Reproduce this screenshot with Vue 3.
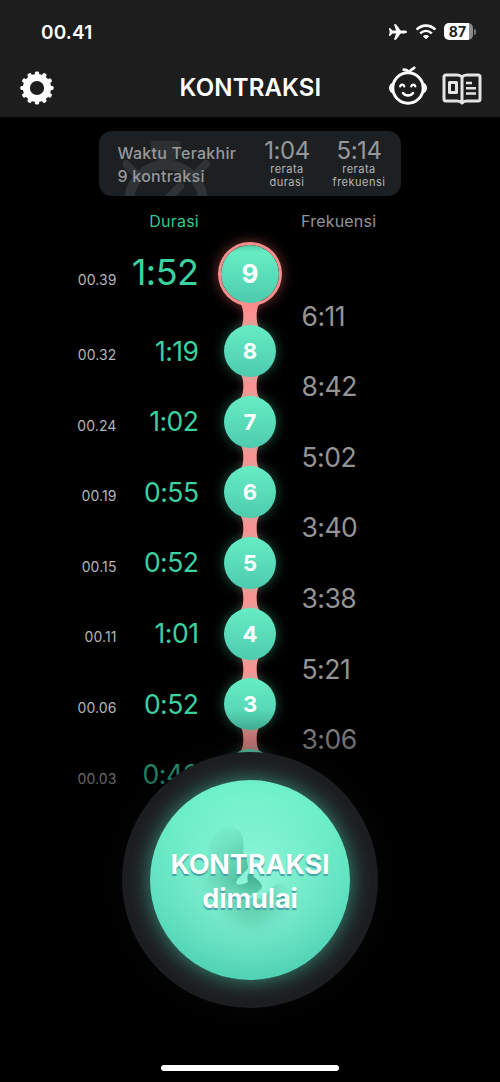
<script setup>
const rows = [
  { n: 9, at: '00.39', duration: '1:52' },
  { n: 8, at: '00.32', duration: '1:19' },
  { n: 7, at: '00.24', duration: '1:02' },
  { n: 6, at: '00.19', duration: '0:55' },
  { n: 5, at: '00.15', duration: '0:52' },
  { n: 4, at: '00.11', duration: '1:01' },
  { n: 3, at: '00.06', duration: '0:52' },
  { n: 2, at: '00.03', duration: '0:46' }
]
const frequencies = ['6:11', '8:42', '5:02', '3:40', '3:38', '5:21', '3:06']
const teeth = Array.from({ length: 12 }, (_, i) => i * 30)
</script>

<template>
  <div class="screen">
    <header class="header">
      <div class="status">
        <span class="clock">00.41</span>
        <div class="indicators">
          <svg class="plane" width="20" height="18" viewBox="0 0 20 18" fill="#fff">
            <path d="M19 9C19 8 17.8 7.6 16.5 7.6H12.7L8 1.2H6L8 7.6H4.3L2.4 5.2H.8L1.8 9L.8 12.8H2.4L4.3 10.4H8L6 16.8H8L12.7 10.4H16.5C17.8 10.4 19 10 19 9Z" />
          </svg>
          <svg class="wifi" width="22" height="16" viewBox="0 0 22 16" fill="none" stroke="#fff" stroke-width="2.6">
            <path d="M1.6 5.7C7 .3 15 .3 20.4 5.7" />
            <path d="M5.2 9.4C8.7 6.1 13.3 6.1 16.8 9.4" />
            <path d="M7.9 12.2C9.7 10.5 12.3 10.5 14.1 12.2L11 15.3Z" fill="#fff" stroke="none" />
          </svg>
          <div class="battery"><span>87</span></div>
          <i class="battery-tip"></i>
        </div>
      </div>
      <nav class="nav">
        <svg class="gear" width="34" height="34" viewBox="-17 -17 34 34">
          <circle r="10.6" fill="none" stroke="#fff" stroke-width="7" />
          <rect v-for="t in teeth" :key="t" x="-2.1" y="-16.6" width="4.2" height="5" rx="1.4" fill="#fff" :transform="`rotate(${t})`" />
        </svg>
        <h1>KONTRAKSI</h1>
        <div class="actions">
          <svg width="40" height="40" viewBox="0 0 40 40" fill="none" stroke="#fff" stroke-width="3" stroke-linecap="round">
            <circle cx="20" cy="22" r="15.2" />
            <path d="M4.8 17.5C.8 19 .8 25 4.8 26.5ZM35.2 17.5C39.2 19 39.2 25 35.2 26.5Z" fill="#fff" stroke-width="1.5" />
            <path d="M20.5 6.5C20 4.5 18 3.7 15.7 3.6M20.5 6.5C21.8 4.2 24 3.8 26.3 1.8" stroke-width="2.7" />
            <path d="M12.2 20.3C12.8 18.1 15.6 18.1 16.2 20.3M23.3 20.3C23.9 18.1 26.7 18.1 27.3 20.3" stroke-width="2.3" />
            <path d="M15 27C17.3 30.2 22.7 30.2 25 27" stroke-width="2.5" />
          </svg>
          <svg width="40" height="32" viewBox="0 0 40 32" fill="none" stroke="#e4e4e5" stroke-width="3" stroke-linejoin="round">
            <path d="M20 4C18.5 2.3 16.8 2 15 2H4Q2 2 2 4V26Q2 28 4 28H15C17 28 18.7 28.4 20 30C21.3 28.4 23 28 25 28H36Q38 28 38 26V4Q38 2 36 2H25C23.2 2 21.5 2.3 20 4ZM20 4V29" />
            <rect x="7.5" y="9.5" width="7" height="10" />
            <path d="M24 10H30M24 15.2H34M24 20.5H34" stroke-width="2.6" />
          </svg>
        </div>
      </nav>
    </header>

    <section class="summary">
      <svg class="stopwatch" width="90" height="60" viewBox="0 0 90 60">
        <path d="M31 1H55Q58 1 58 4V13Q58 16 55 16H52V24H34V16H31Q28 16 28 13V4Q28 1 31 1Z" fill="#2c3033" />
        <circle cx="43" cy="62" r="37" fill="none" stroke="#2f3336" stroke-width="10" />
        <path d="M3 24L14 35M83 24L72 35M43 61L57 46" stroke="#2f3336" stroke-width="8" stroke-linecap="round" />
      </svg>
      <div class="caption">Waktu Terakhir<br />9 kontraksi</div>
      <div class="stat">
        <b>1:04</b><span>rerata<br />durasi</span>
      </div>
      <div class="stat last">
        <b>5:14</b><span>rerata<br />frekuensi</span>
      </div>
    </section>

    <div class="headings">
      <span class="h-duration">Durasi</span>
      <span class="h-frequency">Frekuensi</span>
    </div>

    <main class="timeline">
      <div class="times">
        <div v-for="r in rows" :key="r.n" class="cell">{{ r.at }}</div>
      </div>
      <div class="durations">
        <div v-for="r in rows" :key="r.n" class="cell">{{ r.duration }}</div>
      </div>
      <div class="chain">
        <template v-for="(r, i) in rows" :key="r.n">
          <svg v-if="i > 0" class="link" width="28" height="30" viewBox="0 0 28 30">
            <path d="M3 0C7 6 7.3 10 7.3 15C7.3 20 7 24 3 30H25C21 24 20.7 20 20.7 15C20.7 10 21 6 25 0Z" fill="#ff9292" />
          </svg>
          <div class="bead" :class="{ latest: i === 0 }">{{ r.n }}</div>
        </template>
      </div>
      <div class="frequencies">
        <div v-for="f in frequencies" :key="f" class="cell">{{ f }}</div>
      </div>
    </main>

    <footer class="dock">
      <div class="ring">
        <button class="start">
          <svg class="embryo" width="200" height="200" viewBox="0 0 200 200">
            <defs>
              <linearGradient id="head" gradientUnits="userSpaceOnUse" x1="84" y1="46" x2="84" y2="118">
                <stop offset="0" stop-color="#46b794" stop-opacity="0.12" />
                <stop offset="0.35" stop-color="#46b794" stop-opacity="0.6" />
                <stop offset="0.75" stop-color="#36a788" stop-opacity="0.85" />
                <stop offset="1" stop-color="#46b794" stop-opacity="0.5" />
              </linearGradient>
              <linearGradient id="edge" x1="0" y1="0" x2="1" y2="0">
                <stop offset="0.08" stop-color="#fff" stop-opacity="0" />
                <stop offset="0.75" stop-color="#fff" />
              </linearGradient>
              <mask id="fade"><rect x="42" y="40" width="76" height="90" fill="url(#edge)" /></mask>
              <radialGradient id="body" gradientUnits="userSpaceOnUse" cx="102" cy="118" r="42">
                <stop offset="0" stop-color="#3fae8d" stop-opacity="0.5" />
                <stop offset="0.5" stop-color="#3fae8d" stop-opacity="0.32" />
                <stop offset="1" stop-color="#5cd3b0" stop-opacity="0" />
              </radialGradient>
            </defs>
            <path mask="url(#fade)" d="M83 47C92 49 95 61 93 72C96 77 98 82 98 88C94 94 83 101 87 104C91 106 96 103 98 102C97 98 97 95 99 93C104 97 112 102 112 107C109 114 99 117 89 116C81 124 61 116 43 104C52 91 57 82 58 70C61 54 72 45 83 47Z" fill="url(#head)" />
            <path d="M58 112C75 120 97 116 112 119C119 113 122 101 137 103C146 104 150 113 146 119C148 138 139 155 113 160C78 160 60 139 58 112Z" fill="url(#body)" />
          </svg>
          <span>KONTRAKSI<br />dimulai</span>
        </button>
      </div>
      <i class="home"></i>
    </footer>
  </div>
</template>

<style>
body { background: #000; }
</style>

<style scoped>
* { box-sizing: border-box; }
.screen {
  position: relative;
  width: 500px;
  height: 1082px;
  overflow: hidden;
  background: #000;
  color: #fff;
  font-family: Inter, "Liberation Sans", sans-serif;
}
.header { height: 117px; background: #1d1d1e; }
.status {
  height: 62px;
  padding: 0 24px 0 41px;
  display: flex;
  align-items: center;
  justify-content: space-between;
}
.clock { font-size: 19px; font-weight: 600; letter-spacing: 0.15px; padding-top: 2px; }
.indicators { display: flex; align-items: center; padding-top: 1px; }
.wifi { margin-left: 7px; }
.battery {
  width: 29px;
  height: 17px;
  margin-left: 7px;
  border-radius: 5px;
  background: linear-gradient(90deg, #fff 87%, #8d8d8e 87%);
  color: #1d1d1e;
  font-size: 14px;
  line-height: 17px;
  font-weight: 700;
  text-align: center;
}
.battery span { position: relative; left: -1px; }
.battery-tip { width: 2px; height: 6px; margin-left: 1px; border-radius: 0 2px 2px 0; background: #777; }
.nav {
  height: 55px;
  padding: 0 18px 0 20px;
  display: grid;
  grid-template-columns: 112px 1fr 112px;
  align-items: center;
}
.gear { margin-top: -4px; }
h1 { margin: -4px 0 0 -1px; font-size: 24px; line-height: 30px; font-weight: 600; text-align: center; letter-spacing: 0.15px; white-space: nowrap; }
.actions { display: flex; justify-content: flex-end; align-items: center; gap: 14px; margin-top: -7px; }
.actions svg:last-child { margin-top: 5px; }
.summary {
  position: relative;
  width: 302px;
  height: 65px;
  margin: 14px 0 0 99px;
  padding-left: 19px;
  display: flex;
  border-radius: 13px;
  overflow: hidden;
  background: #1d2022;
  color: #98989b;
}
.stopwatch { position: absolute; left: 24px; top: 9px; }
.caption { position: relative; width: 137px; padding-top: 11px; font-size: 16px; line-height: 22.5px; font-weight: 500; white-space: nowrap; letter-spacing: 0.25px; left: -0.5px; }
.stat { width: 64px; padding-top: 7px; text-align: center; }
.stat.last { width: 80px; }
.stat b { display: block; font-size: 24px; line-height: 25px; font-weight: 400; letter-spacing: -0.5px; }
.stat span { display: block; color: #b5b5b7; font-size: 11px; line-height: 13px; letter-spacing: 0.5px; }
.headings { height: 43px; display: flex; font-size: 16px; line-height: 20px; padding-top: 15px; }
.h-duration { width: 199px; text-align: right; color: #38c495; letter-spacing: 0.25px; }
.h-frequency { margin-left: 102px; color: #949496; letter-spacing: 0.2px; }
.timeline { display: grid; grid-template-columns: 117px 82px 102px 1fr; }
.cell { height: 70.6px; line-height: 70.6px; white-space: nowrap; }
.times { padding: 6px 0.5px 0 0; text-align: right; color: #b5b5b7; font-size: 14px; letter-spacing: 0.1px; }
.times .cell:first-child { margin-bottom: 4.4px; }
.durations { padding-right: 0.5px; text-align: right; color: #3cd1a0; font-size: 26.5px; letter-spacing: -0.5px; }
.durations .cell:first-child { margin: -2px 0 8px; font-size: 36px; letter-spacing: -0.5px; }
.frequencies { padding: 41.7px 0 0 0.5px; color: #949496; font-size: 26.5px; letter-spacing: -0.5px; }
.chain { display: flex; flex-direction: column; align-items: center; padding-top: 3.4px; height: 560px; }
.bead {
  position: relative;
  z-index: 1;
  flex: none;
  width: 52px;
  height: 52px;
  border-radius: 50%;
  background: linear-gradient(#66edc4, #4dcbae);
  box-shadow: 0 0 13px rgba(80, 220, 178, 0.38);
  font-size: 22px;
  font-weight: 700;
  line-height: 52px;
  text-align: center;
}
.bead.latest {
  width: 64px;
  height: 64px;
  border: 3px solid #f88f8e;
  background: linear-gradient(#50c9a3 0, #66edc4 12%, #4dcbae) padding-box;
  box-shadow: 0 0 13px rgba(255, 120, 115, 0.45);
  font-size: 26px;
  line-height: 58px;
}
.link { flex: none; margin: -5.7px 0; filter: drop-shadow(0 0 5px rgba(255, 100, 95, 0.25)); }
.dock {
  position: absolute;
  z-index: 2;
  left: 0;
  right: 0;
  bottom: 0;
  height: 382px;
  padding-top: 52px;
  display: flex;
  flex-direction: column;
  align-items: center;
  background: linear-gradient(transparent 10px, rgba(0, 0, 0, 0.25) 42px, rgba(0, 0, 0, 0.42) 78px, #000 150px);
}
.ring {
  flex: none;
  width: 256px;
  height: 256px;
  display: grid;
  place-items: center;
  border-radius: 50%;
  background: #1c1d20;
  box-shadow: 0 0 35px rgba(70, 70, 75, 0.1);
}
.start {
  position: relative;
  width: 200px;
  height: 200px;
  padding: 3px 0 0;
  border: 0;
  border-radius: 50%;
  background: radial-gradient(circle at 50% 50%, rgba(166, 255, 228, 0.7), rgba(115, 240, 205, 0) 72%), linear-gradient(#6cf0c8 10%, #4ed1b3);
  box-shadow: 0 0 22px rgba(77, 216, 181, 0.62);
  color: #fff;
  font-family: inherit;
  font-size: 27px;
  font-weight: 700;
  line-height: 34px;
  text-shadow: 0 1.5px 1px #459fa2;
}
.start span { position: relative; white-space: nowrap; letter-spacing: -0.1px; }
.embryo { position: absolute; left: 0; top: 0; }
.home { width: 178px; height: 6px; margin-top: 57px; border-radius: 3px; background: #fff; }
</style>
